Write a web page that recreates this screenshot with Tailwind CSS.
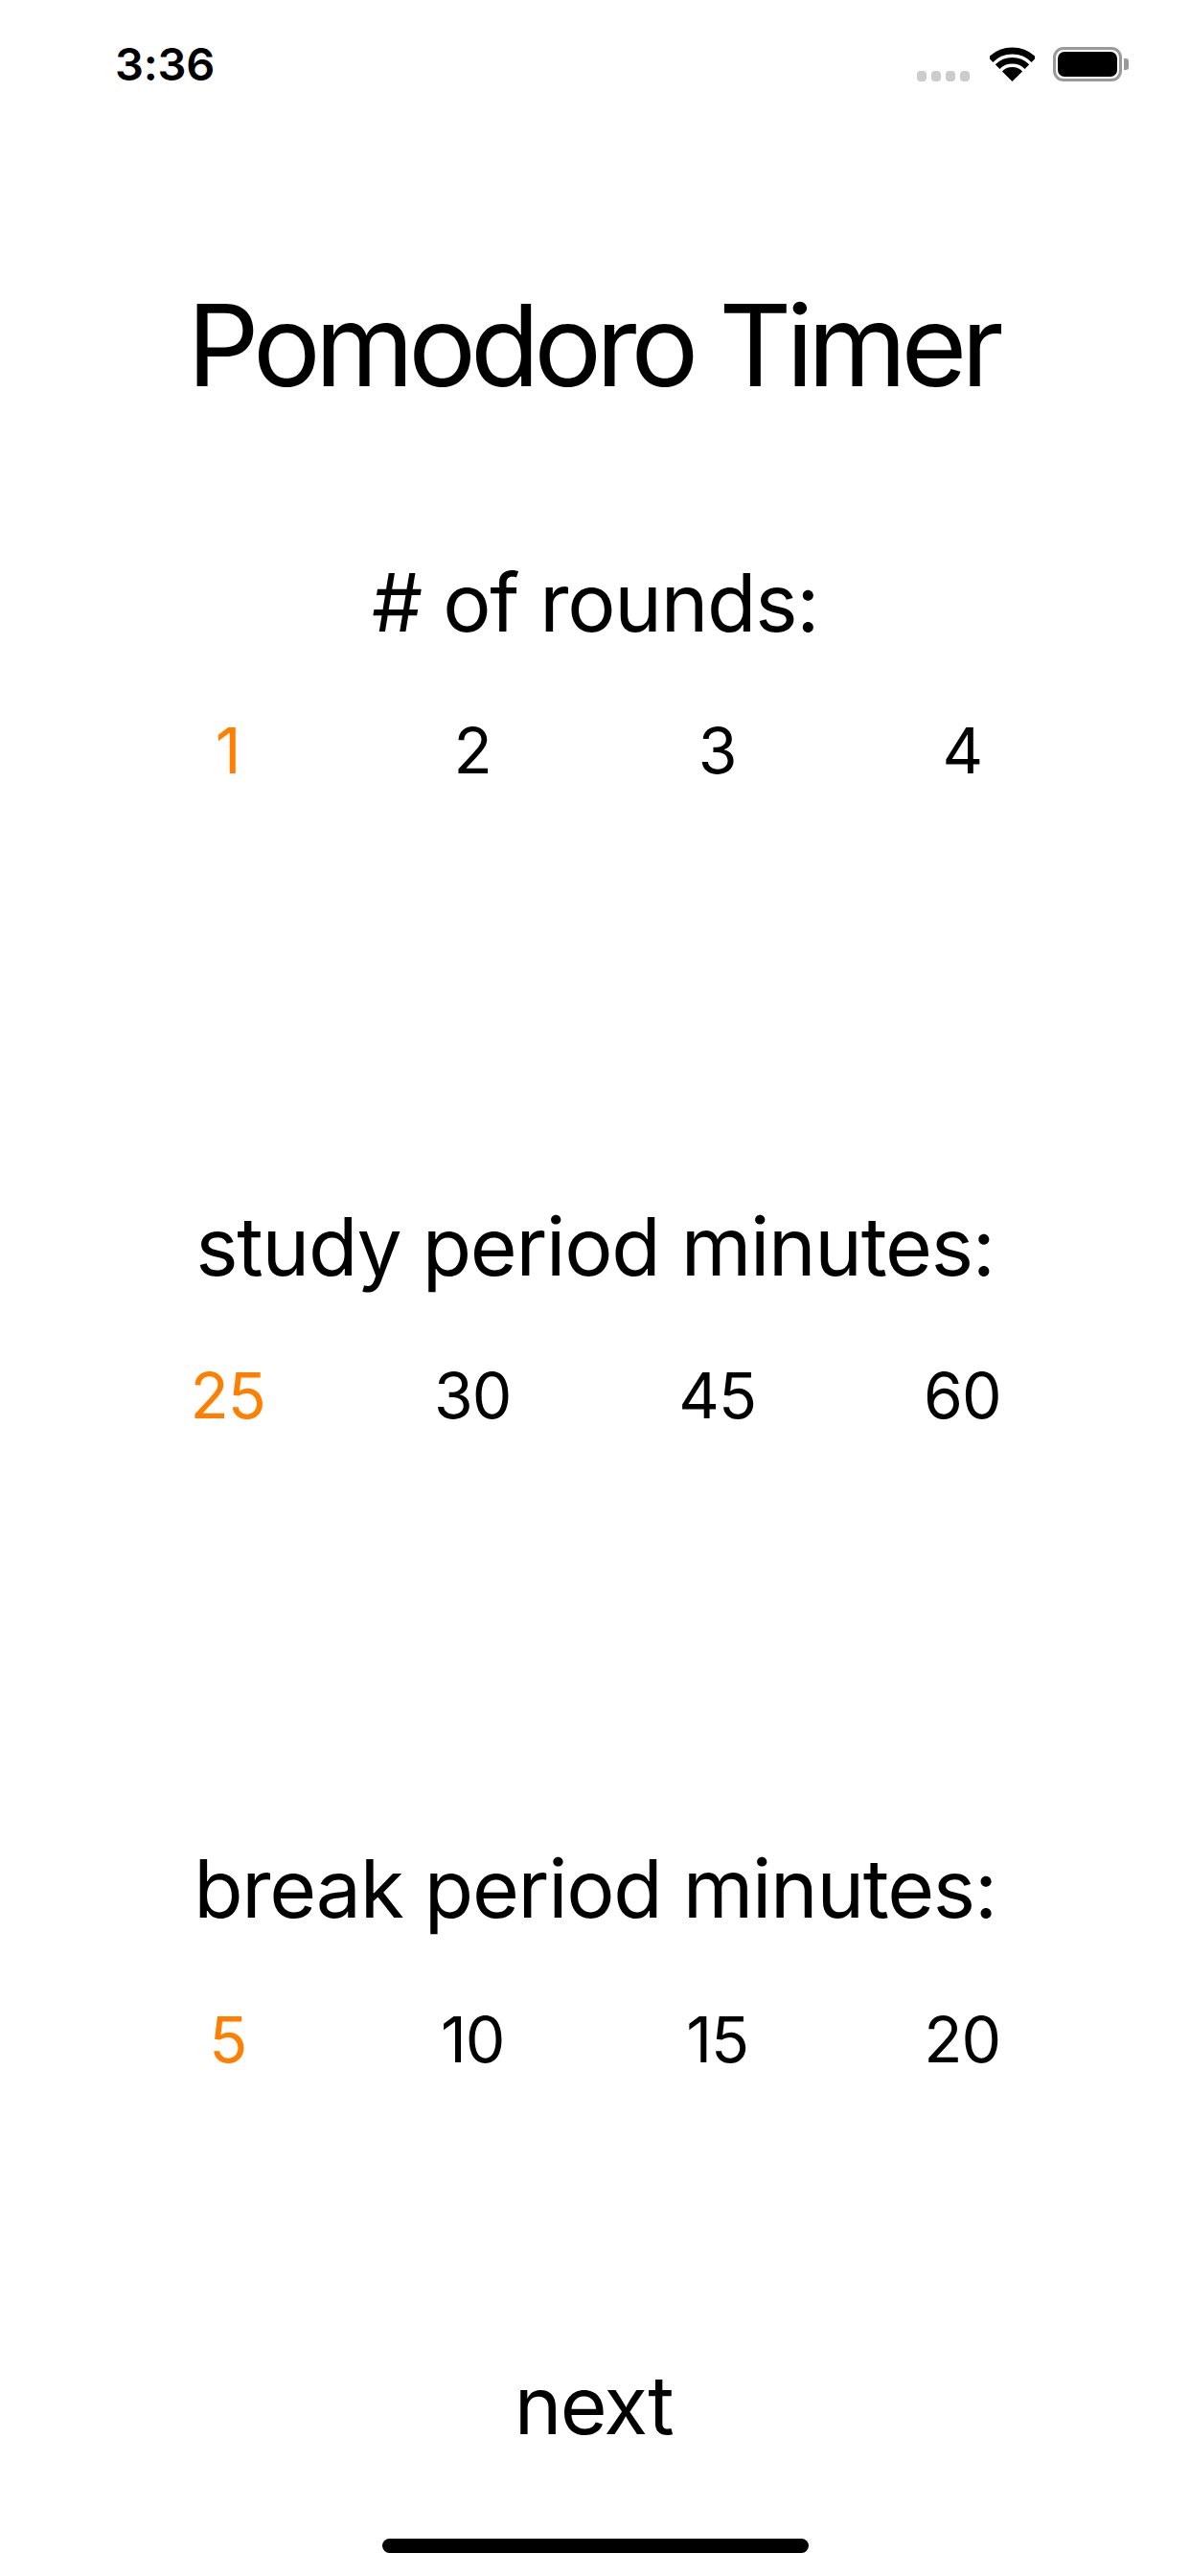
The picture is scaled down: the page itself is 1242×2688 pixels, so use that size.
<!DOCTYPE html>
<html lang="en">

<head>
    <meta charset="UTF-8">
    <meta name="viewport" content="width=device-width, initial-scale=1.0">
    <script src="https://cdn.jsdelivr.net/npm/@tailwindcss/browser@4"></script>
    <title>Pomodoro Timer</title>
</head>

<body class="bg-white">
    <div class="relative w-[1242px] h-[2688px] overflow-hidden bg-white text-black font-['Inter',sans-serif]">
        <!-- status bar -->
        <div class="h-[132px] pt-[45px] pl-[120px] pr-[64px] flex justify-between items-start">
            <span class="text-[47px] leading-[44px] font-semibold tracking-[-0.2px]">3:36</span>
            <div class="flex items-start pt-[4px]">
                <div class="flex gap-[4.5px] mt-[25px] mr-[21px]">
                    <span class="w-[10.5px] h-[11px] rounded-[4px] bg-[#cccccc]"></span>
                    <span class="w-[10.5px] h-[11px] rounded-[4px] bg-[#cccccc]"></span>
                    <span class="w-[10.5px] h-[11px] rounded-[4px] bg-[#cccccc]"></span>
                    <span class="w-[10.5px] h-[11px] rounded-[4px] bg-[#cccccc]"></span>
                </div>
                <svg class="w-[47px] h-[36px] mr-[19px]" viewBox="0 0 47 36" fill="none">
                    <path d="M0.9 13.4A32 32 0 0 1 46.1 13.4" stroke="#000" stroke-width="7" />
                    <path d="M8.1 20.6A21.75 21.75 0 0 1 38.9 20.6" stroke="#000" stroke-width="6.5" />
                    <path d="M23.5 36L12.9 25.4A15 15 0 0 1 34.1 25.4Z" fill="#000" />
                </svg>
                <div class="w-[72px] h-[36px] rounded-[11px] border-[3px] border-[#999999] p-[2px]">
                    <div class="w-full h-full rounded-[7px] bg-black"></div>
                </div>
                <span class="w-[5px] h-[12px] mt-[12px] ml-[2px] rounded-r-[3px] bg-[#999999]"></span>
            </div>
        </div>

        <h1 class="mt-[178px] pr-[5px] text-center text-[118px] leading-[100px] font-normal tracking-[-6px]">Pomodoro Timer</h1>

        <!-- rounds -->
        <section class="mt-[169px] px-[110px]">
            <h2 class="text-center text-[84px] leading-[100px] font-normal tracking-[-1.3px]">&#35; of rounds:</h2>
            <div class="mt-[54px] grid grid-cols-4 text-center text-[66px] leading-[100px] tracking-[-1px]">
                <span class="text-[#ff8000]">1</span>
                <span>2</span>
                <span>3</span>
                <span>4</span>
            </div>
        </section>

        <!-- study -->
        <section class="mt-[418px] px-[110px]">
            <h2 class="text-center text-[84px] leading-[100px] font-normal tracking-[-1.3px]">study period minutes:</h2>
            <div class="mt-[55px] grid grid-cols-4 text-center text-[66px] leading-[100px] tracking-[-1px]">
                <span class="text-[#ff8000]">25</span>
                <span>30</span>
                <span>45</span>
                <span>60</span>
            </div>
        </section>

        <!-- break -->
        <section class="mt-[415px] px-[110px]">
            <h2 class="text-center text-[84px] leading-[100px] font-normal tracking-[-1.3px]">break period minutes:</h2>
            <div class="mt-[57px] grid grid-cols-4 text-center text-[66px] leading-[100px] tracking-[-1px]">
                <span class="text-[#ff8000]">5</span>
                <span>10</span>
                <span>15</span>
                <span>20</span>
            </div>
        </section>

        <div class="mt-[282px] pr-[3px] text-center text-[84px] leading-[100px] tracking-[-1.5px]">next</div>

        <!-- home indicator -->
        <div class="absolute left-[399px] bottom-[24px] w-[445px] h-[15px] rounded-full bg-black"></div>
    </div>
</body>

</html>
